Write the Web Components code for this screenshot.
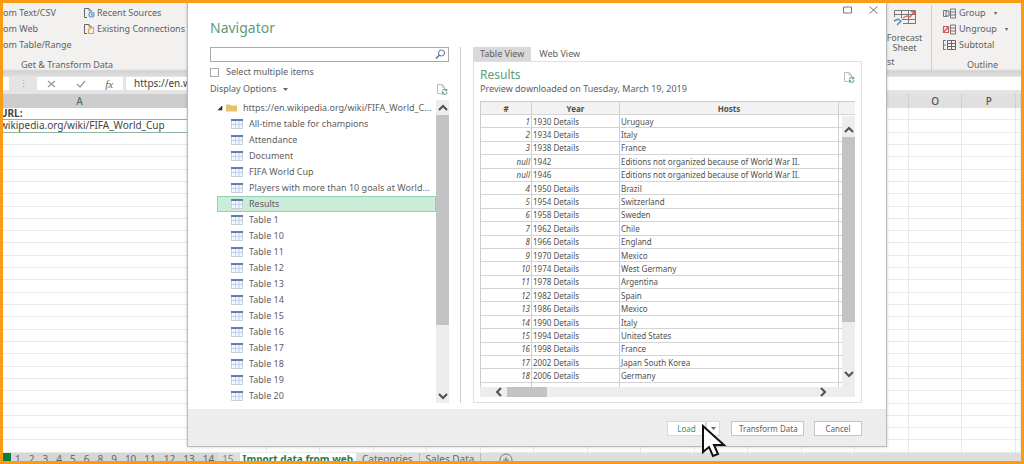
<!DOCTYPE html>
<html lang="en">
<head>
<meta charset="utf-8">
<title>Navigator</title>
<style>
html,body{margin:0;height:100%}
body{font-family:"Noto Sans","Open Sans",sans-serif;font-size:9px;line-height:12px;color:#606060;background:#fff}
</style>
</head>
<body>
<xl-app></xl-app>
<script>
const define=(name,css,html,setup)=>{
  const t=document.createElement('template');
  t.innerHTML=`<style>*{box-sizing:border-box}${css}</style>${typeof html==='string'?html:''}`;
  customElements.define(name,class extends HTMLElement{
    constructor(){super();this.attachShadow({mode:'open'}).append(t.content.cloneNode(true));}
    connectedCallback(){if(setup&&!this.ready){this.ready=true;setup(this,this.shadowRoot);}}
  });
};

define('scroll-bar',`
:host{display:flex;flex-direction:column;width:13px;background:#ededed}
:host([horizontal]){flex-direction:row;width:auto;height:10px;padding:0 24px 0 10px}
button{all:unset;flex:none;display:grid;place-items:center;width:13px;height:15px}
:host([horizontal]) button{width:17px;height:10px}
.track{flex:1;display:flex;flex-direction:column}
:host([horizontal]) .track{flex-direction:row}
.thumb{flex:0 0 var(--thumb,70%);background:#c3c3c3}
svg{fill:none;stroke:#505050;stroke-width:2}
`,'',(el,root)=>{
  const h=el.hasAttribute('horizontal');
  const b=(label,d)=>`<button aria-label="${label}"><svg width="10" height="10"><path d="${d}"/></svg></button>`;
  root.innerHTML+= h
   ? b('Scroll left','M7 1L3 5l4 4')+'<div class="track"><div class="thumb"></div></div>'+b('Scroll right','M3 1l4 4-4 4')
   : b('Scroll up','M1 7l4-4 4 4')+'<div class="track"><div class="thumb"></div></div>'+b('Scroll down','M1 3l4 4 4-4');
});

define('refresh-icon',`:host{display:block;width:12px;height:11px}svg{display:block}`,
`<svg width="12" height="11" fill="none"><path d="M5 9.5H1.5v-9H6L8.500 3V5M6 .5V3h2.500" stroke="#bbb"/><path d="M6.500 7.500a2 2 0 0 1 3.800-1M10.800 8a2 2 0 0 1-3.800 1.200M10.800 4.800v2H9M6.300 10.500v-2h1.800" stroke="#6fae8c" stroke-width="1.100"/></svg>`);

define('link-row',`
:host{display:flex;align-items:center;gap:4px;height:16px;font-size:9px;white-space:nowrap}
button{all:unset;display:flex;align-items:center;gap:2px}
slot[name=icon]::slotted(svg){flex:none;display:block}
`,`<button><slot name="icon"></slot><slot></slot></button>`);

const docIcon=c=>`<svg slot="icon" width="12" height="12" fill="none"><path d="M4 10.500H1.500v-9H6L8.500 4" stroke="#666"/><path d="M6 1.500V4h2.500" stroke="#888"/><path d="${c==='#5b9bd5'?'M6 7.500a2.500 2.500 0 1 0 5 0a2.500 2.500 0 1 0-5 0M8.500 6v2h2':'M5.500 10.500V6h2l1-1.500h2V10.500z'}" stroke="${c}" stroke-width="1.200"/></svg>`;

define('xl-ribbon',`
:host{display:flex;justify-content:space-between;height:73px;padding-top:2px;background:linear-gradient(#f2f1f0 66px,#d2d2d2 68px,#dcdcdc 72px);overflow:hidden}
section{display:flex;flex-direction:column}
.left{width:184px}
.cols{display:flex}
.a{width:80px}
.b{flex:1}
.cap{font-size:9px;line-height:12px;margin:6px 0 0 18px}
.right{flex-direction:row;width:134px}
.fc{width:45px;border-right:1px solid #d0d0d0;height:66px;display:flex;flex-direction:column}
.fc button{all:unset;display:flex;flex-direction:column;font-size:9px;line-height:10px;width:35px;align-items:center;text-align:center;padding-top:4px}
.fc svg{display:block;margin-bottom:7px}
.fc .tail{margin-top:3px;line-height:12px}
.ol{flex:1;padding-left:10px}
.ol .cap{margin-left:25px}
.c{margin-left:6px;font-size:6px}
`,`
<section class="left"><div class="cols">
<div class="a"><link-row>om Text/CSV</link-row><link-row>om Web</link-row><link-row>om Table/Range</link-row></div>
<div class="b"><link-row>${docIcon('#5b9bd5')}Recent Sources</link-row><link-row>${docIcon('#e8a33d')}Existing Connections</link-row></div>
</div><div class="cap">Get &amp; Transform Data</div></section>
<section class="right">
<div class="fc"><button><svg width="25" height="17" fill="none"><path d="M2.500 8V1.500h21v13H11M3 5.500h20M9.500 1.500v8M16.500 1.500v13M10 10.500h13" stroke="#777"/><path d="M2 12l4-2 3 2-4 4" stroke="#4a90c2" stroke-width="1.400"/><path d="M11 9l4-2 3 1 4-5M19 2.500h3.500v3" stroke="#d6655f" stroke-width="1.300"/></svg>Forecast<br>Sheet</button><span class="tail">st</span></div>
<div class="ol">
<link-row><svg slot="icon" width="15" height="11" fill="none"><path d="M8.500 1h5v9h-5zM8.500 4h5M8.500 7h5M5 2.500H1.500v6H5" stroke="#777"/><path d="M4 3h3v5H4z" stroke="#56778f"/></svg>Group<span class="c">▾</span></link-row>
<link-row><svg slot="icon" width="15" height="11" fill="none"><path d="M8.500 1h5v9h-5zM8.500 4h5M8.500 7h5" stroke="#777"/><path d="M1.500 2.500h5v6h-5zM1.500 8.500l5-6" stroke="#d35b5b" stroke-width="1.200"/></svg>Ungroup<span class="c">▾</span></link-row>
<link-row><svg slot="icon" width="15" height="12" fill="none"><path d="M5.500 1.500h8v9h-8zM5.500 4.500h8M5.500 7.500h8M9.500 1.500v9" stroke="#666"/><path d="M1.500 1v10M1 1.500h3M1 6h3M1 10.500h3" stroke="#5b7f95"/></svg>Subtotal</link-row>
<div class="cap">Outline</div></div>
</section>`);

define('formula-bar',`
:host{display:flex;align-items:center;gap:3px;height:18px;background:#e4e4e4;padding-bottom:3px}
.name{width:6px;height:13px;background:#fff}
.dots{width:22px;text-align:center;color:#999;line-height:13px}
.fx{display:flex;justify-content:space-around;align-items:center;width:86px;height:13px;background:#fff}
.fx button{all:unset;display:flex}
i{font:italic 11px/12px "Liberation Serif",serif}
input{flex:1;min-width:0;height:13px;border:0;padding:0 8px;background:#fff;font:10px/13px "Noto Sans",sans-serif;color:#444;outline:0}
svg{fill:none;stroke:#999;stroke-width:1.300}
`,`<div class="name"></div><div class="dots">⋮</div><div class="fx"><button aria-label="Cancel entry"><svg width="9" height="8"><path d="M1 1l7 6M8 1L1 7"/></svg></button><button aria-label="Enter"><svg width="10" height="8"><path d="M1 4l3 3 5-6"/></svg></button><button aria-label="Insert function"><i>fx</i></button></div><input aria-label="Formula" value="https://en.wikipedia.org/wiki/FIFA_World_Cup">`);

define('xl-sheet',`
:host{display:block;flex:1;min-height:0;background:#fff;overflow:hidden}
table{width:100%;height:100%;border-collapse:separate;border-spacing:0;table-layout:fixed}
th,td{padding:0;border-right:1px solid #e6ebe8;border-bottom:1px solid #e6ebe8;line-height:11px;white-space:nowrap;text-align:left;font-size:10px;color:#444}
td{height:12px}
th{height:14px;background:#e0e0e0;color:#555;text-align:center;font-weight:500;border-color:#d0d0d0;border-bottom:0}
th:first-child{background:#cdcdcd;color:#477660;padding-right:56px}
tr:nth-child(1) td:first-child{font-weight:700}
td div{height:11px;margin-left:-3px}
td:first-child{border-right:0}
.sel td:first-child{border-bottom-color:#8fb5a2}
.top td:first-child{border-bottom-color:#8fb5a2}
.a{width:210px}.z{width:5px}
`,'',(el,root)=>{
  const cols=[...Array(16).keys()];
  const row=(t,c='')=>`<tr class="${c}"><td><div>${t}</div></td>${'<td></td>'.repeat(16)}</tr>`;
  root.innerHTML+=`<table><colgroup><col class="a">${'<col>'.repeat(15)}<col class="z"></colgroup><thead><tr><th>A</th>${cols.map(i=>`<th>${i===13?'O':i===14?'P':''}</th>`).join('')}</tr></thead><tbody>${row('URL:','top')}${row('wikipedia.org/wiki/FIFA_World_Cup','sel')}${row('').repeat(26)}</tbody></table>`;
});

define('sheet-tabs',`
:host{display:block;height:8px;overflow:hidden;background:#dedede}
nav{display:flex;height:13px;font-size:10px;line-height:13px;white-space:nowrap}
a{color:#666;text-decoration:none;padding:0 4px;background:#d6d6d6}
.g{width:8px;padding:0;background:#107c41}
.light{color:#888;background:#dedede;padding-right:6px}
.on{background:#fff;color:#2b7a4f;font-weight:700;padding:0 3px}
.t{background:none;padding:0 6px;border-right:1px solid #bbb}
svg{margin-left:18px}
`,`<nav><a href="#" class="g" aria-label="First"></a>${[1,2,3,4,5,6,8,9,10,11,12,13,14].map(n=>`<a href="#">${n}</a>`).join('')}<a href="#" class="light">15</a><a href="#" class="on">Import data from web</a><a href="#" class="t">Categories</a><a href="#" class="t">Sales Data</a><svg width="14" height="14" fill="none" stroke="#777"><circle cx="7" cy="7" r="6"/><path d="M7 4v6M4 7h6"/></svg></nav>`);

define('tree-item',`
:host{display:flex;align-items:center;gap:6px;height:16px;margin-left:7px;padding-left:13px;border:1px solid transparent;white-space:nowrap}
:host([selected]){background:#caecd9;border-color:#94d3b1}
:host([folder]){padding-left:0}
span{overflow:hidden;text-overflow:ellipsis}
svg{flex:none}
`,'',(el,root)=>{
  const icon=el.hasAttribute('folder')
   ?'<svg width="19" height="10"><path d="M0 7h4V3z" fill="#333" stroke="#333" stroke-width=".6"/><path d="M8 1.500h4l1 1h6V8.500H8z" fill="#e8bf6a"/></svg>'
   :'<svg width="12" height="10"><path d="M.5.5h11v9H.5z" fill="#f4f7fb" stroke="#c9ced6"/><path d="M0 0h12v2H0z" fill="#5a80ae"/><path d="M4.500 2v7M8 2v7M1 5.500h10" stroke="#c3d1e3" fill="none"/></svg>';
  root.innerHTML+=icon+'<span><slot></slot></span>';
});

define('nav-list',`
:host{display:flex;flex-direction:column;flex:0 1 239px;min-width:0;height:356px}
.search{display:flex;height:15px;border:1px solid #a9a9a9;align-items:center;padding-right:2px}
.search input{flex:1;min-width:0;border:0;outline:0;padding:0 4px;height:12px;font:9px "Noto Sans",sans-serif}
.search button,.opt button{all:unset;display:flex;align-items:center}
label{display:flex;align-items:center;gap:7px;height:12px;margin-top:4px}
label input{appearance:none;margin:0;width:9px;height:9px;border:1px solid #aaa;background:#fff}
.opt{display:flex;justify-content:space-between;align-items:center;height:12px;margin-top:5px;padding-right:1px}
.opt svg{margin-left:6px}
.tree{display:flex;margin-top:5px;flex:1;min-height:0}
.items{flex:1;min-width:0}
scroll-bar{--thumb:77%}
`,`<div class="search"><input aria-label="Search"><button aria-label="Search"><svg width="11" height="11" fill="none" stroke="#4f7299"><circle cx="6.500" cy="4" r="3"/><path d="M4.500 6L1 9.500" stroke-width="1.600"/></svg></button></div>
<label><input type="checkbox">Select multiple items</label>
<div class="opt"><button>Display Options<svg width="5" height="3"><path d="M0 0h5L2.500 3z" fill="#666"/></svg></button><refresh-icon></refresh-icon></div>
<div class="tree"><div class="items"><tree-item folder>https://en.wikipedia.org/wiki/FIFA_World_C...</tree-item>${['All-time table for champions','Attendance','Document','FIFA World Cup','Players with more than 10 goals at World...','Results','Table 1','Table 10','Table 11','Table 12','Table 13','Table 14','Table 15','Table 16','Table 17','Table 18','Table 19','Table 20'].map(t=>`<tree-item${t==='Results'?' selected':''}>${t}</tree-item>`).join('')}</div><scroll-bar></scroll-bar></div>`);

const data=[[1,1930,'Uruguay'],[2,1934,'Italy'],[3,1938,'France'],['null',1942,'Editions not organized because of World War II.'],['null',1946,'Editions not organized because of World War II.'],[4,1950,'Brazil'],[5,1954,'Switzerland'],[6,1958,'Sweden'],[7,1962,'Chile'],[8,1966,'England'],[9,1970,'Mexico'],[10,1974,'West Germany'],[11,1978,'Argentina'],[12,1982,'Spain'],[13,1986,'Mexico'],[14,1990,'Italy'],[15,1994,'United States'],[16,1998,'France'],[17,2002,'Japan South Korea'],[18,2006,'Germany']];

define('data-preview',`
:host{display:flex;flex-direction:column;flex:1;min-width:0;height:356px}
.tabs{display:flex;gap:1px;height:14px}
.tabs button{all:unset;padding:0 7px;font-size:9px;line-height:14px}
.tabs .on{background:#d9d9d9}
.panel{flex:1;min-height:0;border:1px solid #e0e0e0;padding:5px 6px;display:flex;flex-direction:column}
header{display:flex;justify-content:space-between;height:34px}
h2{margin:0;font-size:12px;line-height:16px;font-weight:400;color:#5f9a7a}
p{margin:0;line-height:11px}
refresh-icon{margin-top:5px}
.grid{flex:1;min-height:0;position:relative;border-left:1px solid #ccc}
table{width:100%;height:100%;table-layout:fixed;border-collapse:separate;border-spacing:0;font-size:8px;line-height:11px;color:#505050}
th,td{padding:0 1px;border-right:1px solid #cfcfcf;border-bottom:1px solid #d4d4d4;white-space:nowrap;text-align:left}
th{height:14px;background:#f2f2f2;text-align:center;border-top:1px solid #ccc;font-weight:700}
td:first-child{text-align:right;font-style:italic}
th:last-child,td:last-child{border-right:0}
.end td{height:4px;border-bottom:0}
.i{width:51px}.y{width:88px}.s{width:16px}
.grid scroll-bar{position:absolute;right:0;top:15px;bottom:0;--thumb:81%;padding:6px 0}
scroll-bar[horizontal]{--thumb:13%}
`,`<div class="tabs"><button class="on">Table View</button><button>Web View</button></div>
<div class="panel"><header><div><h2>Results</h2><p>Preview downloaded on Tuesday, March 19, 2019</p></div><refresh-icon></refresh-icon></header>
<div class="grid"><table><colgroup><col class="i"><col class="y"><col><col class="s"></colgroup><thead><tr><th>#</th><th>Year</th><th>Hosts</th><th></th></tr></thead><tbody>${data.map(([n,y,h])=>`<tr><td>${n}</td><td>${y}${n==='null'?'':' Details'}</td><td>${h}</td><td></td></tr>`).join('')}<tr class="end"><td></td><td></td><td></td><td></td></tr></tbody></table><scroll-bar></scroll-bar></div>
<scroll-bar horizontal></scroll-bar></div>`);

define('ui-button',`
:host{display:block}
button{display:block;width:100%;height:15px;margin:0;border:1px solid #c6c6c6;background:#fff;padding:0 7px;font:8px/12px "Noto Sans",sans-serif;color:#606060;text-align:center;white-space:nowrap}
:host([primary]) button{color:#3f8c63;border-color:#d8d8d8}
:host([arrow]) button{padding:0;display:grid;place-items:center}
`,`<button><slot></slot></button>`);

define('nav-dialog',`
:host{display:flex;flex-direction:column;background:#fff;border:1px solid #b4bdbc;border-top:0;box-shadow:0 0 3px #0003}
.bar{display:flex;justify-content:flex-end;gap:17px;height:15px;padding:3px 8px 0 0}
.bar button{all:unset;display:flex;height:9px}
svg{display:block;fill:none;stroke:#777}
h1{margin:0 22px;height:29px;font-size:14px;line-height:20px;font-weight:400;color:#5f9a7a}
main{display:flex;padding:0 24px 0 22px}
.rule{width:1px;background:#ccc;margin:0 12px 0 11px}
footer{display:flex;align-items:center;justify-content:flex-end;height:37px;margin-top:6px;padding:2px 24px 0 0;background:#ededed}
.load{display:flex;margin-right:11px}
.load ui-button:first-child{width:39px}
.load ui-button:last-child{width:14px}
.tr{width:73px;margin-right:10px}.ca{width:48px}
`,`<div class="bar"><button aria-label="Maximize"><svg width="9" height="8"><path d="M.5 1h8v6h-8z"/></svg></button><button aria-label="Close"><svg width="9" height="8"><path d="M.5.5l8 7M8.500.5l-8 7"/></svg></button></div>
<h1>Navigator</h1>
<main><nav-list></nav-list><div class="rule"></div><data-preview></data-preview></main>
<footer><div class="load"><ui-button primary>Load</ui-button><ui-button primary arrow><svg width="5" height="3"><path d="M0 0h5L2.500 3z" fill="#666" stroke="none"/></svg></ui-button></div><ui-button class="tr">Transform Data</ui-button><ui-button class="ca">Cancel</ui-button></footer>`);

define('xl-app',`
:host{display:flex;flex-direction:column;height:100vh;border:3px solid #fb9b14;box-sizing:border-box;overflow:hidden;position:relative}
nav-dialog{position:absolute;left:184px;right:134px;top:0}
.cursor{position:absolute;left:698px;top:421px}
`,`<xl-ribbon></xl-ribbon><formula-bar></formula-bar><xl-sheet></xl-sheet><sheet-tabs></sheet-tabs><nav-dialog></nav-dialog>
<svg class="cursor" width="28" height="34"><path d="M2 2v26l6-5 4 9 5-2-4-9h10z" fill="#fff" stroke="#111" stroke-width="2"/></svg>`);
</script>
</body>
</html>
